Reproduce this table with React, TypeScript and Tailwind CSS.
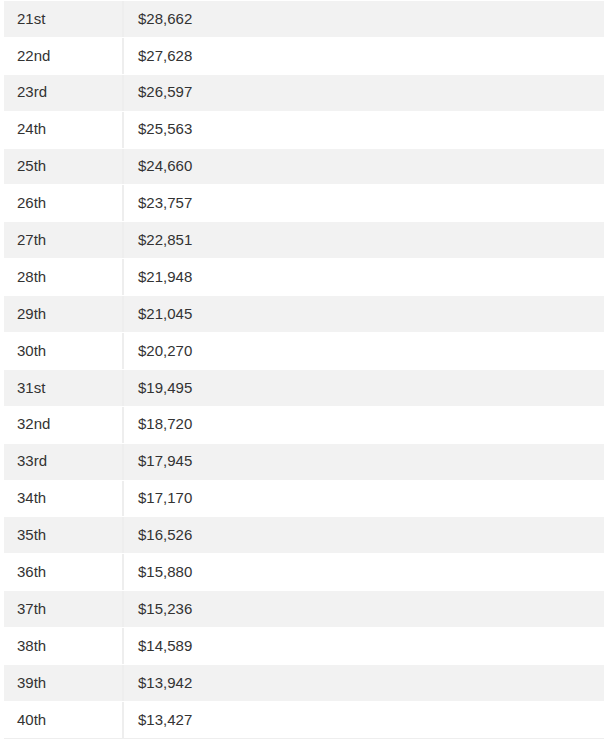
const rows: [string, string][] = [
  ["21st", "$28,662"],
  ["22nd", "$27,628"],
  ["23rd", "$26,597"],
  ["24th", "$25,563"],
  ["25th", "$24,660"],
  ["26th", "$23,757"],
  ["27th", "$22,851"],
  ["28th", "$21,948"],
  ["29th", "$21,045"],
  ["30th", "$20,270"],
  ["31st", "$19,495"],
  ["32nd", "$18,720"],
  ["33rd", "$17,945"],
  ["34th", "$17,170"],
  ["35th", "$16,526"],
  ["36th", "$15,880"],
  ["37th", "$15,236"],
  ["38th", "$14,589"],
  ["39th", "$13,942"],
  ["40th", "$13,427"],
];

export default function App() {
  return (
    <div className="w-[604px] h-[740px] overflow-hidden bg-white pl-1 font-['Liberation_Sans',Arial,sans-serif] text-[15px] text-[#333333]">
      <div className="flex flex-col border-b border-[#eeeeee]">
        {rows.map(([place, amount], i) => (
          <div
            key={place}
            className={`flex h-[36.9px] items-center border-t border-white ${
              i % 2 === 0 ? "bg-[#f2f2f2]" : "bg-white"
            }`}
          >
            <div className="flex h-full w-[120px] items-center border-r-2 border-[#eeeeee] pl-[13px]">
              {place}
            </div>
            <div className="pl-[14px]">{amount}</div>
          </div>
        ))}
      </div>
    </div>
  );
}
